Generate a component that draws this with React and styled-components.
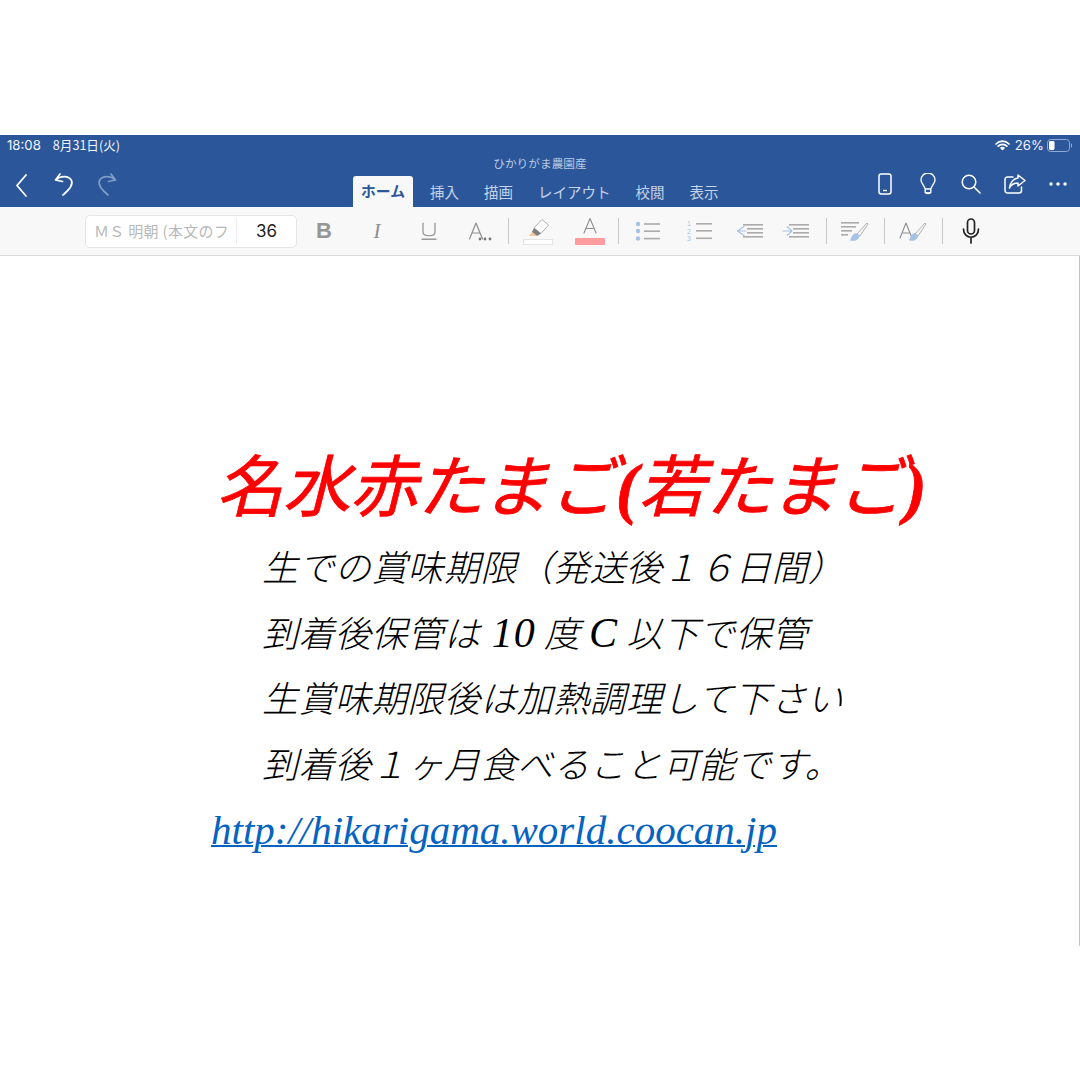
import React from "react";
import styled, { createGlobalStyle } from "styled-components";

const Global = createGlobalStyle`
  html, body { margin: 0; padding: 0; background: #fff; }
  body { font-family: "Noto Sans CJK JP", "Liberation Sans", sans-serif; }
`;

const Page = styled.div`
  width: 1080px;
  height: 1080px;
  padding-top: 135px;
  box-sizing: border-box;
  overflow: hidden;
  background: #fff;
`;
const Header = styled.header`
  height: 72px;
  background: #2b579a;
  color: #fff;
  display: flex;
  flex-direction: column;
`;
const StatusBar = styled.div`
  height: 20px;
  padding: 0 8px 0 7px;
  box-sizing: border-box;
  display: flex;
  align-items: center;
  font: 400 13.2px/20px Inter, "Noto Sans CJK JP", sans-serif;
  color: #f2f5fa;
`;
const StatusDate = styled.span`
  margin-left: 12px;
  font-size: 12.6px;
  font-family: "Noto Sans CJK JP", sans-serif;
`;
const StatusRight = styled.div`
  margin-left: auto;
  display: flex;
  align-items: center;
  gap: 5px;
`;
const Percent = styled.span`
  font-size: 13.2px;
  margin-right: -2px;
`;
const DocTitle = styled.div`
  height: 17px;
  text-align: center;
  font: 400 11.7px/16px "Noto Sans CJK JP", sans-serif;
  color: #b9cae3;
`;
const NavRow = styled.div`
  flex: 1;
  display: flex;
  align-items: flex-end;
  padding-right: 13px;
`;
const LeftTools = styled.div`
  width: 353px;
  height: 100%;
  display: flex;
  align-items: flex-start;
  padding-left: 13px;
  box-sizing: border-box;
`;
const RightTools = styled.div`
  margin-left: auto;
  height: 100%;
  display: flex;
  align-items: flex-start;
`;
const IconSlot = styled.span`
  width: ${(p) => p.$w}px;
  margin-left: ${(p) => p.$ml || 0}px;
  display: flex;
  justify-content: center;
  svg { display: block; }
`;
const Tabs = styled.nav`
  display: flex;
  align-items: flex-end;
  height: 31px;
`;
const Tab = styled.span`
  font: 400 14.5px/1 "Noto Sans CJK JP", sans-serif;
  color: #c4d2e8;
  margin-left: ${(p) => p.$ml}px;
  padding-bottom: 8px;
  white-space: nowrap;
`;
const ActiveTab = styled.span`
  width: 60px;
  height: 31px;
  box-sizing: border-box;
  background: #f8f8f8;
  border-radius: 3px 3px 0 0;
  color: #2b579a;
  font: 700 14.8px/30px "Noto Sans CJK JP", sans-serif;
  text-align: center;
  white-space: nowrap;
`;
const Toolbar = styled.div`
  height: 48px;
  background: #f8f8f8;
  border-bottom: 1px solid #dcdcdc;
  display: flex;
  align-items: center;
  padding-left: 85px;
`;
const FontBox = styled.div`
  width: 212px;
  height: 33px;
  box-sizing: border-box;
  background: #fff;
  border: 1px solid #e6e6e6;
  border-radius: 5px;
  display: flex;
  align-items: center;
`;
const FontName = styled.span`
  width: 151px;
  height: 26px;
  padding-left: 8px;
  box-sizing: border-box;
  overflow: hidden;
  white-space: nowrap;
  font: 400 15px/26px "Noto Sans CJK JP", sans-serif;
  letter-spacing: 0.3px;
  color: #b8b8b8;
  border-right: 1px solid #ececec;
`;
const FontSize = styled.span`
  flex: 1;
  text-align: center;
  font: 400 17px/1 Inter, sans-serif;
  color: #222;
`;
const Tool = styled.span`
  width: ${(p) => p.$w}px;
  display: flex;
  justify-content: center;
  align-items: center;
  height: 32px;
  svg { display: block; }
`;
const BoldGlyph = styled.span`
  font: 700 22px/1 "Liberation Sans", sans-serif;
  color: #969696;
`;
const ItalicGlyph = styled.span`
  font: italic 400 21px/1 "Liberation Serif", serif;
  color: #8e8e8e;
`;
const Sep = styled.span`
  width: ${(p) => p.$w}px;
  display: flex;
  justify-content: center;
  &::before {
    content: "";
    width: 1px;
    height: 26px;
    background: #c8c8c8;
  }
`;
const Doc = styled.main`
  height: 690px;
  box-sizing: border-box;
  border-right: 1px solid #c4c4c4;
  padding-top: 189px;
`;
const Title = styled.h1`
  margin: 0 0 0 216px;
  white-space: nowrap;
  height: 80px;
  font: italic 400 67px/80px "Noto Sans CJK JP", serif;
  -webkit-text-stroke: 0.8px #f00;
  color: #f00;
  position: relative;
  top: -3px;
`;
const Paren = styled.span`
  font-family: "Liberation Serif", serif;
  font-weight: 700;
`;
const Line = styled.p`
  margin: 0 0 0 262px;
  white-space: nowrap;
  height: 65.6px;
  font: italic 300 36px/80px "Noto Sans CJK JP", serif;
  letter-spacing: 0.4px;
  color: #000;
`;
const Num = styled.span`
  font-family: "Liberation Serif", serif;
  font-weight: 400;
  font-size: 42px;
  letter-spacing: 1px;
  margin-left: ${(p) => p.$ml || 0}px;
`;
const Link = styled.a`
  display: block;
  margin-left: 211px;
  height: 66px;
  font: italic 400 41px/86px "Liberation Serif", serif;
  color: #0563c1;
  text-decoration: underline;
  text-decoration-thickness: 2px;
  white-space: nowrap;
`;

const S = { fill: "none", strokeLinecap: "round", strokeLinejoin: "round" };
const Svg = ({ w, h, children, mt }) => (
  <svg width={w} height={h} viewBox={`0 0 ${w} ${h}`} style={mt != null ? { marginTop: mt } : undefined}>{children}</svg>
);
const L = "#8f8f8f";
const B = "#a4c3e6";

const Lines = ({ x, ys, w, c = "#ababab" }) => ys.map((y, i) => <rect key={i} x={x} y={y} width={w} height="1.6" fill={c} />);

export default function App() {
  return (
    <Page>
      <Global />
      <Header>
        <StatusBar>
          <span>18:08</span>
          <StatusDate>8月31日(火)</StatusDate>
          <StatusRight>
            <svg width="15" height="11" viewBox="0 0 15 11">
              <path d="M1 4 A9 9 0 0 1 14 4 M3.2 6.2 A6 6 0 0 1 11.8 6.2" {...S} stroke="#fff" strokeWidth="1.7" />
              <path d="M5 8 A3 3 0 0 1 10 8 L7.5 10.6Z" fill="#fff" />
            </svg>
            <Percent>26%</Percent>
            <svg width="25" height="13" viewBox="0 0 25 13">
              <rect x="0.5" y="0.5" width="22" height="12" rx="3.2" fill="none" stroke="#93abcf" />
              <rect x="2" y="2" width="5.5" height="9" rx="1.4" fill="#fff" />
              <path d="M24 4.5 A2 2 0 0 1 24 8.5Z" fill="#93abcf" />
            </svg>
          </StatusRight>
        </StatusBar>
        <DocTitle>ひかりがま農園産</DocTitle>
        <NavRow>
          <LeftTools>
            <IconSlot $w={18}>
              <Svg w={14} h={24} mt={1}><path d="M11 2 L2 12.5 L11 23" {...S} stroke="#fff" strokeWidth="1.8" /></Svg>
            </IconSlot>
            <IconSlot $w={22} $ml={23}>
              <Svg w={22} h={25}><path d="M6 2 L1.5 8 L8.5 9.5 M2 8 C6 3.5 15 3.5 17.5 8.5 C19.5 13 15 18 9 23" {...S} stroke="#fff" strokeWidth="1.7" /></Svg>
            </IconSlot>
            <IconSlot $w={22} $ml={19}>
              <Svg w={22} h={25}><path d="M16 2 L20.5 8 L13.5 9.5 M20 8 C16 3.5 7 3.5 4.5 8.5 C2.5 13 7 18 13 23" {...S} stroke="#7f9cc5" strokeWidth="1.7" /></Svg>
            </IconSlot>
          </LeftTools>
          <Tabs>
            <ActiveTab>ホーム</ActiveTab>
            <Tab $ml={17}>挿入</Tab>
            <Tab $ml={25}>描画</Tab>
            <Tab $ml={25}>レイアウト</Tab>
            <Tab $ml={25}>校閲</Tab>
            <Tab $ml={25}>表示</Tab>
          </Tabs>
          <RightTools>
            <IconSlot $w={14}>
              <Svg w={14} h={22} mt={1}>
                <rect x="1" y="1" width="12" height="20" rx="2.2" {...S} stroke="#fff" strokeWidth="1.5" />
                <path d="M5 17.5 H9" stroke="#fff" strokeWidth="1.4" />
              </Svg>
            </IconSlot>
            <IconSlot $w={16} $ml={28}>
              <Svg w={16} h={22} mt={1}>
                <path d="M5 16 C5 12.5 1 11 1 7 A7 7 0 0 1 15 7 C15 11 11 12.5 11 16 Z M5.4 19.6 C6 21 10 21 10.6 19.6 M5.2 16 V19.6 H10.8 V16" {...S} stroke="#fff" strokeWidth="1.4" />
              </Svg>
            </IconSlot>
            <IconSlot $w={20} $ml={25}>
              <Svg w={20} h={20} mt={2}>
                <circle cx="8" cy="8" r="6.8" {...S} stroke="#fff" strokeWidth="1.5" />
                <path d="M13 13 L19 19" {...S} stroke="#fff" strokeWidth="1.6" />
              </Svg>
            </IconSlot>
            <IconSlot $w={22} $ml={23}>
              <Svg w={22} h={20} mt={2}>
                <path d="M9 3 H3.5 A2.5 2.5 0 0 0 1 5.5 V16.5 A2.5 2.5 0 0 0 3.5 19 H15 A2.5 2.5 0 0 0 17.5 16.5 V13" {...S} stroke="#fff" strokeWidth="1.5" />
                <path d="M14 1 L21 6.5 L14 12 V9 C10 9 7 11 5.5 14 C6 8.5 9.5 4.5 14 4 Z" {...S} stroke="#fff" strokeWidth="1.5" />
              </Svg>
            </IconSlot>
            <IconSlot $w={18} $ml={23}>
              <Svg w={18} h={4} mt={10}>
                <circle cx="2" cy="2" r="1.7" fill="#fff" /><circle cx="9" cy="2" r="1.7" fill="#fff" /><circle cx="16" cy="2" r="1.7" fill="#fff" />
              </Svg>
            </IconSlot>
          </RightTools>
        </NavRow>
      </Header>
      <Toolbar>
        <FontBox>
          <FontName>ＭＳ 明朝 (本文のフ</FontName>
          <FontSize>36</FontSize>
        </FontBox>
        <Tool $w={54}><BoldGlyph>B</BoldGlyph></Tool>
        <Tool $w={52}><ItalicGlyph>I</ItalicGlyph></Tool>
        <Tool $w={51}>
          <Svg w={16} h={18}>
            <path d="M2 1 V10 C2 15 14 15 14 10 V1" {...S} stroke={L} strokeWidth="1.2" />
            <rect x="0.5" y="16.5" width="15" height="1.4" fill={L} />
          </Svg>
        </Tool>
        <Tool $w={52}>
          <Svg w={24} h={20}>
            <path d="M1.5 18 L8 2 L14.5 18 M4 12 H12" {...S} stroke={L} strokeWidth="1.2" />
            <circle cx="12" cy="18" r="1.4" fill="#777" /><circle cx="17" cy="18" r="1.4" fill="#777" /><circle cx="22" cy="18" r="1.4" fill="#777" />
          </Svg>
        </Tool>
        <Sep $w={4} />
        <Tool $w={56}>
          <Svg w={30} h={28}>
            <path d="M11 11 L19 2.5 L25.5 8 L18 16.5 Z" fill="#fff" stroke="#b0b0b0" />
            <path d="M11 11 L18 16.5 L14 19 L9 15Z" fill="#7c7c7c" />
            <path d="M9 15 L14 19 H6Z" fill="#f6c79b" />
            <rect x="0.5" y="22.5" width="29" height="5" fill="#fff" stroke="#e4e4e4" />
          </Svg>
        </Tool>
        <Tool $w={48}>
          <Svg w={30} h={28}>
            <path d="M9 16 L15 1.5 L21 16 M11 11.5 H19" {...S} stroke={L} strokeWidth="1.1" />
            <rect x="0" y="21" width="30" height="7" rx="1" fill="#ff9c9f" />
          </Svg>
        </Tool>
        <Sep $w={8} />
        <Tool $w={52}>
          <Svg w={26} h={20}>
            <circle cx="3" cy="3" r="2.2" fill={B} /><circle cx="3" cy="10" r="2.2" fill={B} /><circle cx="3" cy="17.5" r="2.2" fill={B} />
            <Lines x={9} ys={[2.2, 9.4, 16.8]} w={16} />
          </Svg>
        </Tool>
        <Tool $w={52}>
          <Svg w={26} h={22}>
            <text x="0" y="6" fontSize="7" fill={B} fontFamily="Liberation Sans">1</text>
            <text x="0" y="13.5" fontSize="7" fill={B} fontFamily="Liberation Sans">2</text>
            <text x="0" y="21" fontSize="7" fill={B} fontFamily="Liberation Sans">3</text>
            <Lines x={9} ys={[3, 10, 17.5]} w={16} />
          </Svg>
        </Tool>
        <Tool $w={48}>
          <Svg w={28} h={16}>
            <path d="M8 3.5 L1.5 8 L8 12.5 M2 8 H10" {...S} stroke={B} strokeWidth="1.1" />
            <Lines x={7} ys={[1]} w={20} />
            <Lines x={11} ys={[5, 9]} w={16} />
            <Lines x={7} ys={[13]} w={20} />
          </Svg>
        </Tool>
        <Tool $w={44}>
          <Svg w={28} h={16}>
            <path d="M5 3.5 L10 8 L5 12.5 M1 8 H9.5" {...S} stroke={B} strokeWidth="1.1" />
            <Lines x={7} ys={[1]} w={20} />
            <Lines x={11} ys={[5, 9]} w={16} />
            <Lines x={7} ys={[13]} w={20} />
          </Svg>
        </Tool>
        <Sep $w={16} />
        <Tool $w={42}>
          <Svg w={28} h={20}>
            <Lines x={0} ys={[1]} w={18} />
            <Lines x={0} ys={[5]} w={15} />
            <Lines x={0} ys={[9]} w={11} />
            <Lines x={0} ys={[13]} w={7} />
            <path d="M16 13 L26 2 L27 3 L19 15Z" fill="none" stroke="#a8a8a8" strokeWidth="0.9" />
            <path d="M9 19.5 C10.5 15 13 11.5 16 12.5 C19 13.5 19 16 17 18 C15 20 12 20 9 19.5Z" fill={B} />
          </Svg>
        </Tool>
        <Sep $w={16} />
        <Tool $w={42}>
          <Svg w={28} h={20}>
            <path d="M1 17 L7 2 L13 17 M3.5 12 H10.5" {...S} stroke={L} strokeWidth="1.1" />
            <path d="M16 13 L26 2 L27 3 L19 15Z" fill="none" stroke="#a8a8a8" strokeWidth="0.9" />
            <path d="M10 19.5 C11.5 15 13.5 11.5 16.5 12.5 C19.5 13.5 19.5 16 17.5 18 C15.5 20 13 20 10 19.5Z" fill={B} />
          </Svg>
        </Tool>
        <Sep $w={16} />
        <Tool $w={42}>
          <Svg w={18} h={26}>
            <rect x="5.5" y="1" width="7" height="15" rx="3.5" fill="none" stroke="#222" strokeWidth="1.7" />
            <path d="M1.5 11 C1.5 22 16.5 22 16.5 11 M9 19 V25" {...S} stroke="#222" strokeWidth="1.7" />
          </Svg>
        </Tool>
      </Toolbar>
      <Doc>
        <Title>名水赤たまご<Paren>(</Paren>若たまご<Paren>)</Paren></Title>
        <Line>生での賞味期限（発送後１６日間）</Line>
        <Line>到着後保管は <Num $ml={3}>10</Num> 度 <Num>C</Num> 以下で保管</Line>
        <Line>生賞味期限後は加熱調理して下さい</Line>
        <Line>到着後１ヶ月食べること可能です。</Line>
        <Link href="#">http://hikarigama.world.coocan.jp</Link>
      </Doc>
    </Page>
  );
}
